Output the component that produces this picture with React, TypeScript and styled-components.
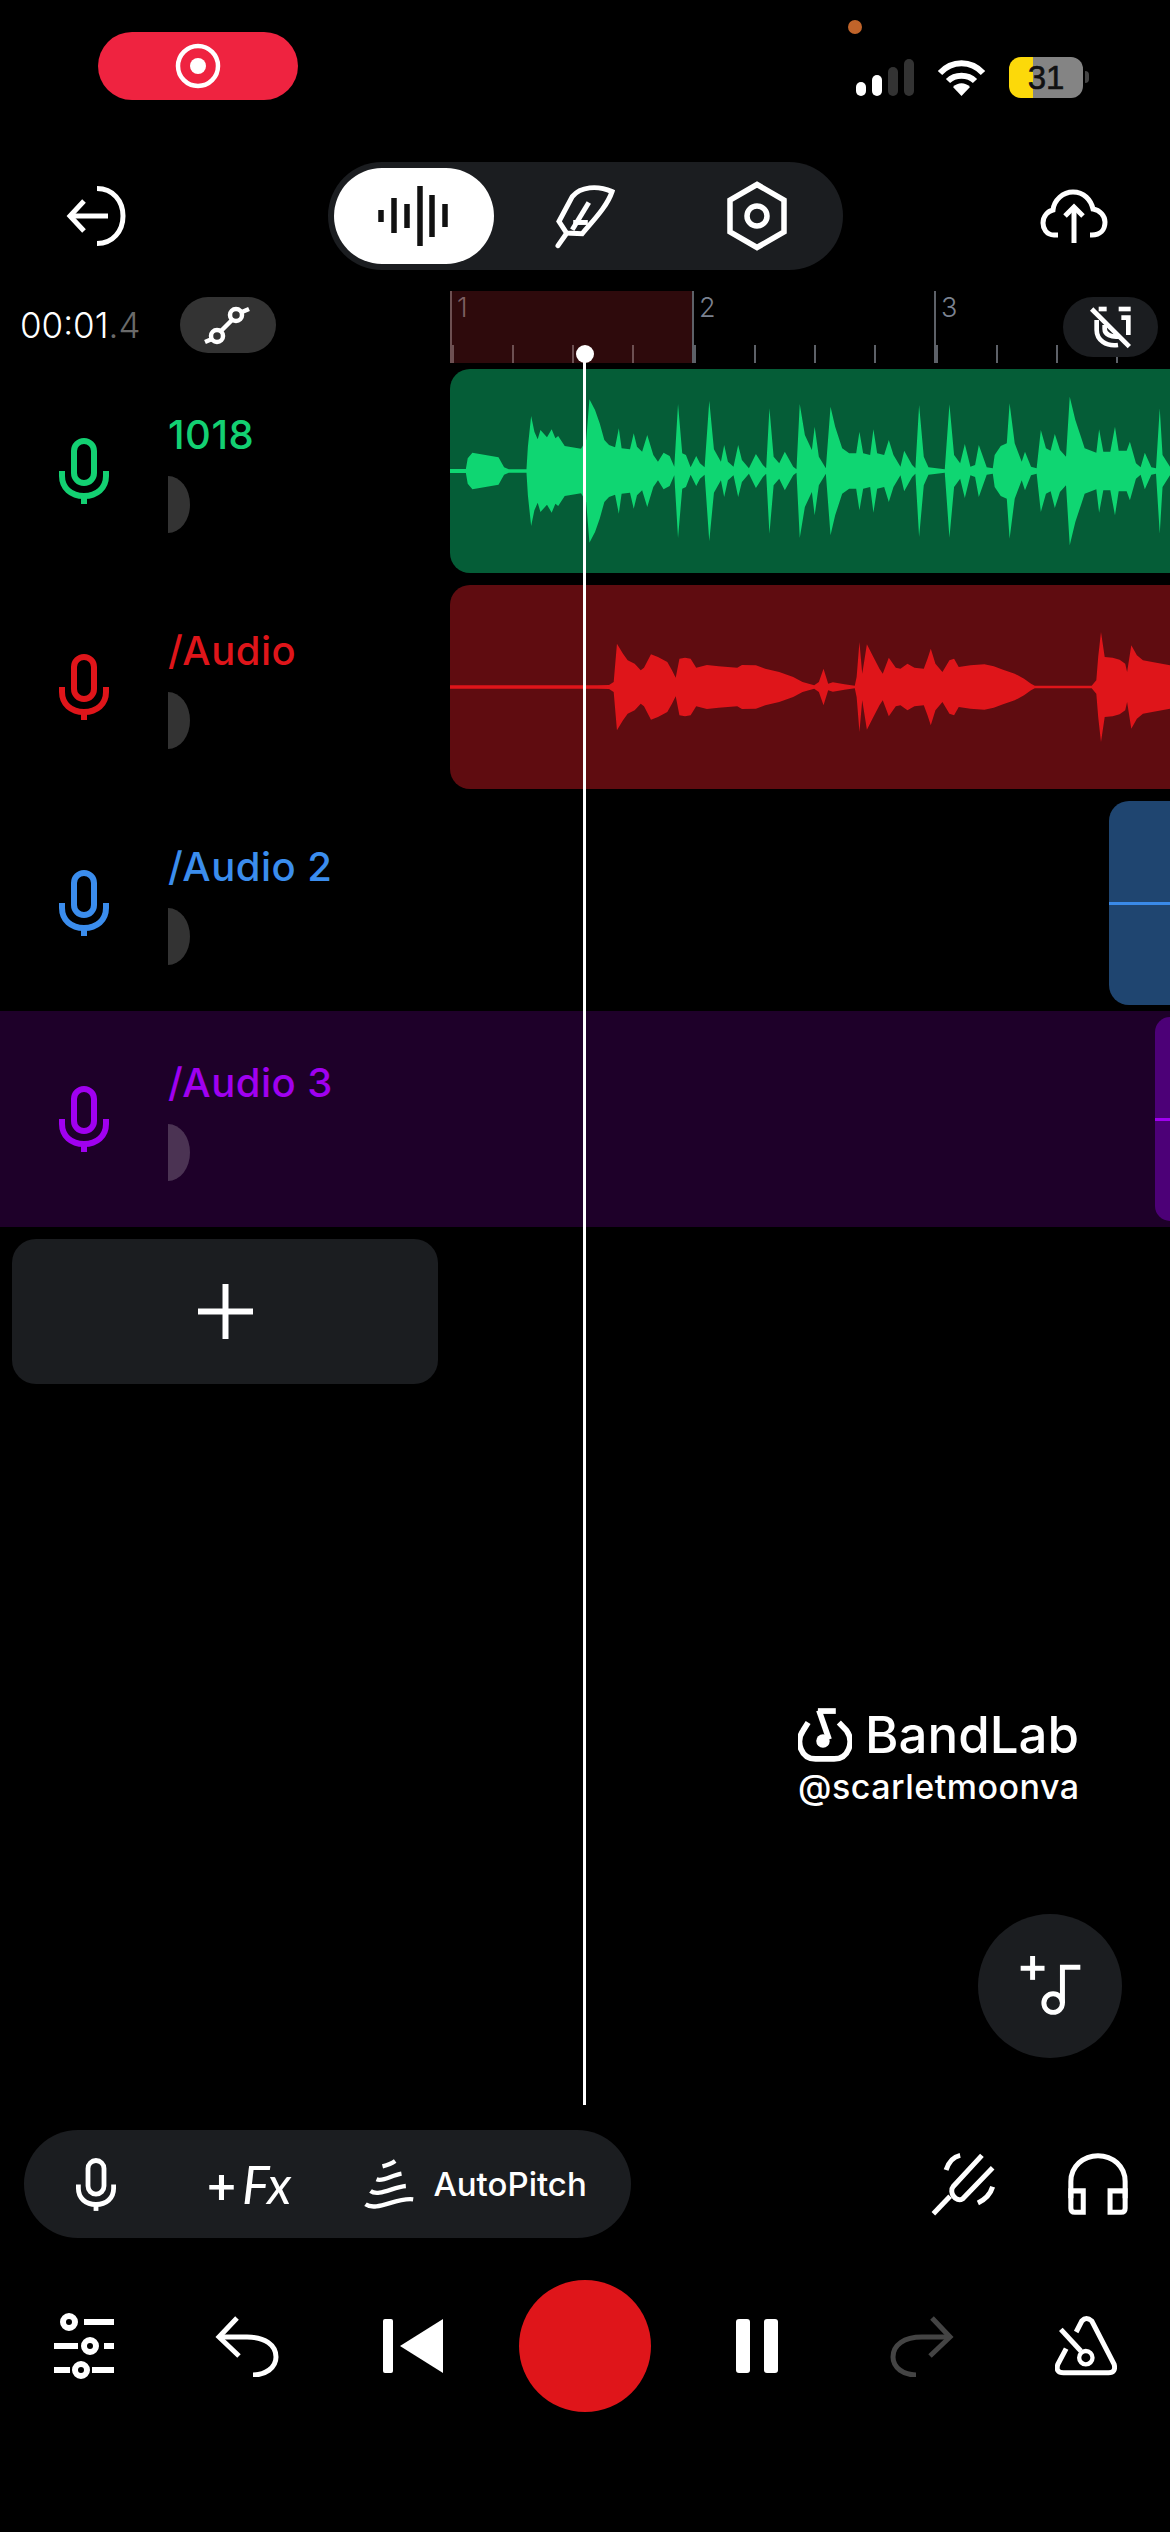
import React from 'react';
import styled, { createGlobalStyle } from 'styled-components';

const panel = '#1b1d20';
const uiFont = '"Inter", "Liberation Sans", sans-serif';

const GlobalStyle = createGlobalStyle`
  html, body {
    margin: 0;
    padding: 0;
    background: #000;
  }
`;

const Page = styled.div`
  position: relative;
  display: flex;
  flex-direction: column;
  width: 1170px;
  height: 2532px;
  overflow: hidden;
  background: #000;
  color: #fff;
  font-family: ${uiFont};
`;

/* status bar */
const StatusBar = styled.div`
  position: relative;
  display: flex;
  align-items: flex-start;
  height: 162px;
`;

const RecordingPill = styled.div`
  display: flex;
  align-items: center;
  justify-content: center;
  width: 200px;
  height: 68px;
  margin: 32px 0 0 98px;
  border-radius: 34px;
  background: #ef2340;
`;

const OrangeDot = styled.span`
  position: absolute;
  top: 20px;
  left: 848px;
  width: 14px;
  height: 14px;
  border-radius: 50%;
  background: #c0642a;
`;

const StatusIcons = styled.div`
  display: flex;
  align-items: center;
  gap: 23px;
  height: 41px;
  margin: 57px 87px 0 auto;
`;

const SignalBars = styled.div`
  display: flex;
  align-items: flex-end;
  gap: 6px;
  height: 37px;
`;

const SignalBar = styled.span<{ $h: number; $on?: boolean }>`
  width: 10px;
  height: ${(p) => p.$h}px;
  border-radius: 5px;
  background: ${(p) => (p.$on ? '#fff' : '#333')};
`;

const Battery = styled.div`
  position: relative;
  width: 74px;
  height: 41px;
  border-radius: 12px;
  background: linear-gradient(90deg, #fcd90a 0 24px, #848484 24px);
  color: #111;
  font-family: "Liberation Sans", sans-serif;
  font-size: 33px;
  font-weight: 400;
  line-height: 41px;
  text-align: center;
  -webkit-text-stroke: 0.6px #111;

  &::after {
    content: '';
    position: absolute;
    top: 14px;
    right: -6px;
    width: 4px;
    height: 12px;
    border-radius: 0 4px 4px 0;
    background: #444;
  }
`;

/* top toolbar */
const Toolbar = styled.div`
  display: grid;
  grid-template-columns: 328px 515px 1fr;
  align-items: center;
  height: 108px;
`;

const BackButton = styled.div`
  display: flex;
  padding-left: 66px;
`;

const Segmented = styled.div`
  display: flex;
  gap: 12px;
  box-sizing: border-box;
  height: 108px;
  padding: 6px;
  border-radius: 54px;
  background: ${panel};
`;

const SegmentTab = styled.div<{ $active?: boolean }>`
  display: flex;
  align-items: center;
  justify-content: center;
  width: 160px;
  height: 96px;
  border-radius: 48px;
  background: ${(p) => (p.$active ? '#fff' : 'transparent')};
`;

const UploadButton = styled.div`
  display: flex;
  justify-self: end;
  margin-right: 62px;
`;

/* timeline header */
const TimelineRow = styled.div`
  position: relative;
  display: flex;
  height: 72px;
  margin-top: 21px;
`;

const TimeBlock = styled.div`
  display: flex;
  align-items: center;
  flex: 0 0 450px;
  box-sizing: border-box;
  padding-left: 20px;
  height: 68px;
`;

const TimeText = styled.span`
  width: 160px;
  font-size: 35px;
  font-weight: 300;
  white-space: nowrap;

  em {
    font-style: normal;
    color: #6a6a6a;
  }
`;

const RoundButton = styled.div`
  display: flex;
  align-items: center;
  justify-content: center;
  width: 96px;
  height: 56px;
  border-radius: 28px;
  background: #333;
`;

const Ruler = styled.div`
  display: flex;
  flex: 1;
  overflow: hidden;
`;

const Bar = styled.div<{ $active?: boolean }>`
  position: relative;
  display: flex;
  align-items: flex-end;
  flex: 0 0 240.5px;
  height: 72px;
  box-sizing: border-box;
  border-left: 2px solid ${(p) => (p.$active ? '#6d5052' : '#5d6168')};
  background: ${(p) => (p.$active ? '#2e0a0c' : 'transparent')};
`;

const BarNumber = styled.span<{ $active?: boolean }>`
  position: absolute;
  top: 1px;
  left: 5px;
  font-size: 27px;
  font-weight: 300;
  line-height: 32px;
  color: ${(p) => (p.$active ? '#7d5f61' : '#7b8290')};
`;

const Beat = styled.span<{ $active?: boolean }>`
  flex: 0 0 60px;
  box-sizing: border-box;
  height: 18px;
  border-left: 2px solid ${(p) => (p.$active ? '#6d5052' : '#5d6168')};

  &:first-of-type {
    flex-basis: 58px;
    border-left: none;
  }
`;

const MagnetButton = styled.div`
  position: absolute;
  top: 6px;
  left: 1063px;
  display: flex;
  align-items: center;
  justify-content: center;
  width: 95px;
  height: 60px;
  border-radius: 30px;
  background: ${panel};
`;

/* tracks */
const TrackRow = styled.div<{ $selected?: boolean }>`
  display: flex;
  height: 216px;
  background: ${(p) => (p.$selected ? '#1e0029' : 'transparent')};
`;

const TrackHeader = styled.div`
  display: flex;
  flex: 0 0 450px;
  box-sizing: border-box;
`;

const MicCell = styled.div<{ $color: string }>`
  display: flex;
  align-items: center;
  justify-content: center;
  flex: 0 0 168px;
  color: ${(p) => p.$color};
`;

const TrackInfo = styled.div`
  display: flex;
  flex-direction: column;
  padding-top: 52px;
`;

const TrackName = styled.div<{ $color: string }>`
  height: 40px;
  font-size: 40px;
  font-weight: 500;
  line-height: 40px;
  letter-spacing: 0.5px;
  white-space: nowrap;
  color: ${(p) => p.$color};
`;

const Knob = styled.div`
  width: 22px;
  height: 57px;
  margin-top: 21px;
  border-radius: 0 22px 22px 0 / 0 28.5px 28.5px 0;
  background: rgba(255, 255, 255, 0.2);
`;

const Lane = styled.div<{ $offset: number }>`
  display: flex;
  flex: 1;
  box-sizing: border-box;
  padding: 6px 0 6px ${(p) => p.$offset}px;
  min-width: 0;
`;

const Clip = styled.div<{ $bg: string }>`
  display: flex;
  align-items: center;
  flex: 1;
  height: 204px;
  overflow: hidden;
  border-radius: 20px 0 0 20px;
  background: ${(p) => p.$bg};
`;

const ClipLine = styled.span<{ $color: string }>`
  flex: 1;
  height: 3px;
  background: ${(p) => p.$color};
`;

const WaveSvg = styled.svg`
  display: block;
  width: 100%;
  height: 100%;
`;

const AddTrack = styled.div`
  display: flex;
  align-items: center;
  justify-content: center;
  width: 426px;
  height: 145px;
  margin: 12px 0 0 12px;
  border-radius: 24px;
  background: ${panel};
`;

/* watermark and fab */
const Watermark = styled.div`
  display: flex;
  flex-direction: column;
  margin: 324px 0 0 798px;
`;

const BrandRow = styled.div`
  display: flex;
  align-items: center;
  gap: 13px;
  height: 54px;
`;

const BrandName = styled.span`
  font-size: 51px;
  font-weight: 500;
  line-height: 54px;
`;

const Handle = styled.div`
  margin-top: 5px;
  font-size: 34px;
  font-weight: 500;
  line-height: 40px;
  letter-spacing: 0.5px;
`;

const Fab = styled.div`
  display: flex;
  align-items: center;
  justify-content: center;
  width: 144px;
  height: 144px;
  margin: 107px 0 0 978px;
  border-radius: 50%;
  background: ${panel};
`;

/* bottom controls */
const ToolRow = styled.div`
  display: flex;
  align-items: center;
  height: 108px;
  margin: 72px 42px 0 24px;
`;

const ToolPill = styled.div`
  display: flex;
  align-items: center;
  box-sizing: border-box;
  width: 607px;
  height: 108px;
  padding-left: 52px;
  border-radius: 54px;
  background: ${panel};
`;

const FxLabel = styled.span`
  margin: 0 72px 0 91px;
  font-family: "Lato", sans-serif;
  font-size: 50px;
  font-weight: 700;
  line-height: 1;
  white-space: nowrap;

  i {
    margin-left: 6px;
    font-size: 52px;
    font-weight: 400;
  }
`;

const AutoPitchLabel = styled.span`
  margin-left: 18px;
  font-size: 33px;
  font-weight: 500;
  white-space: nowrap;
`;

const ToolIcons = styled.div`
  display: flex;
  align-items: center;
  gap: 71px;
  margin-left: auto;
`;

const Transport = styled.div`
  display: grid;
  grid-template-columns: 168px 158px 174px 170px 174px 156px 172px;
  justify-items: center;
  align-items: center;
  height: 132px;
  margin-top: 42px;
  color: #fff;
`;

const RecordButton = styled.div`
  width: 132px;
  height: 132px;
  border-radius: 50%;
  background: #df151a;
`;

const PauseBars = styled.div`
  display: flex;
  gap: 14px;
`;

const PauseBar = styled.span`
  width: 14px;
  height: 54px;
  border-radius: 3px;
  background: #fff;
`;

const Playhead = styled.div`
  position: absolute;
  top: 354px;
  left: 583px;
  width: 3px;
  height: 1751px;
  background: #fff;

  &::before {
    content: '';
    position: absolute;
    top: -9px;
    left: -7.5px;
    width: 18px;
    height: 18px;
    border-radius: 50%;
    background: #fff;
  }
`;

/* icons */
const Line = ({ size = [50, 50], view, w = 5, color = 'currentColor', children }: {
  size?: number[];
  view: string;
  w?: number;
  color?: string;
  children: React.ReactNode;
}) => (
  <svg
    width={size[0]}
    height={size[1]}
    viewBox={view}
    fill="none"
    stroke={color}
    strokeWidth={w}
    style={{ display: 'block', flex: 'none' }}
  >
    {children}
  </svg>
);

const MicIcon = ({ width = 50, height = 66 }: { width?: number; height?: number }) => (
  <Line size={[width, height]} view="0 0 50 66" w={6}>
    <rect x="15" y="3" width="20" height="42" rx="10" />
    <path d="M3 33V38C3 50 12 58 25 58C38 58 47 50 47 38V33" />
    <path d="M25 58V66" />
  </Line>
);

const waveBars = [
  [5, 210, 222],
  [18, 198, 233],
  [31, 204, 228],
  [44, 186, 246],
  [56, 195, 237],
  [69, 204, 227],
];

const WaveformIcon = () => (
  <Line size={[75, 60]} view="0 186 75 60" w={5.5} color="#111">
    {waveBars.map(([x, a, b]) => (
      <path key={x} d={`M${x} ${a}V${b}`} />
    ))}
  </Line>
);

const greenPeaks = [
  [24, 327], [58, 327], [62, 295], [72, 278], [128, 292], [140, 322], [150, 328], [188, 328], [191, 260], [198, 168],
  [205, 215], [212, 238], [218, 210], [232, 232], [242, 208], [250, 235], [256, 228], [270, 258], [305, 266], [316, 240],
  [323, 118], [335, 150], [345, 190], [355, 240], [365, 255], [378, 262], [386, 205], [392, 265], [410, 268], [418, 220],
  [425, 260], [436, 275], [447, 225], [460, 285], [470, 305], [482, 278], [495, 288], [505, 320], [513, 132], [522, 280],
  [530, 285], [540, 322], [552, 288], [560, 310], [570, 322], [580, 122], [590, 268], [605, 305], [612, 255], [620, 305],
  [632, 320], [642, 255], [650, 300], [665, 325], [680, 282], [695, 315], [702, 325], [709, 145], [718, 290], [730, 310],
  [742, 275], [760, 320], [767, 328], [774, 132], [785, 225], [800, 270], [806, 200], [815, 290], [830, 325], [840, 140],
  [850, 200], [865, 265], [880, 280], [895, 280], [902, 215], [910, 280], [925, 285], [932, 208], [940, 280], [955, 285],
  [965, 240], [975, 285], [990, 320], [998, 272], [1015, 315], [1022, 325], [1030, 135], [1040, 290], [1050, 322], [1085, 328],
  [1095, 133], [1105, 285], [1118, 310], [1128, 252], [1140, 320], [1150, 315], [1158, 255], [1175, 322], [1188, 325], [1192, 285],
  [1205, 258], [1218, 250], [1224, 130], [1235, 250], [1250, 305], [1257, 275], [1270, 320], [1282, 325], [1291, 210], [1302, 265],
  [1312, 272], [1321, 222], [1332, 270], [1345, 290], [1353, 110], [1365, 180], [1378, 235], [1385, 265], [1410, 278], [1416, 208],
  [1425, 275], [1440, 275], [1450, 200], [1458, 272], [1475, 272], [1482, 245], [1495, 310], [1505, 322], [1514, 278], [1528, 322],
  [1538, 325], [1546, 145], [1552, 285], [1568, 320],
];

const redPeaks = [
  [24, 315], [340, 315], [365, 314], [375, 305], [382, 190], [395, 220], [405, 240], [420, 250], [433, 270], [440, 262],
  [455, 222], [470, 230], [490, 245], [500, 270], [508, 292], [516, 235], [528, 232], [540, 235], [552, 262], [575, 254],
  [600, 258], [640, 262], [650, 254], [680, 255], [700, 265], [730, 275], [760, 290], [780, 305], [805, 315], [815, 305],
  [825, 265], [835, 310], [845, 306], [870, 312], [892, 316], [896, 290], [902, 185], [908, 280], [918, 192], [930, 225],
  [945, 265], [952, 280], [965, 232], [980, 262], [990, 265], [1005, 250], [1020, 262], [1040, 265], [1048, 235], [1055, 205],
  [1065, 250], [1080, 275], [1095, 240], [1105, 235], [1115, 260], [1140, 255], [1170, 252], [1190, 258], [1210, 268], [1235, 280],
  [1255, 295], [1270, 310], [1278, 316], [1400, 316], [1410, 300], [1414, 230], [1420, 155], [1428, 230], [1445, 232], [1460, 238],
  [1472, 250], [1476, 275], [1485, 195], [1497, 225], [1510, 240], [1530, 245], [1568, 255],
];

// peaks are measured on the upper side, the lower side is mirrored around the clip's centre line
const wavePath = (peaks: number[][], centre: number) => {
  const top = peaks.map(([x, y]) => `${x} ${y}`);
  const bottom = [...peaks].reverse().map(([x, y]) => `${x} ${2 * centre - y}`);
  return `M${top.join('L')}L${bottom.join('L')}Z`;
};

const Waveform = ({ peaks, centre, top, color }: { peaks: number[][]; centre: number; top: number; color: string }) => (
  <WaveSvg viewBox={`24 ${top} 1544 612`} preserveAspectRatio="none">
    <path d={wavePath(peaks, centre)} fill={color} />
  </WaveSvg>
);

const tracks = [
  { name: '1018', color: '#13d072', clip: '#055d37', offset: 0, peaks: greenPeaks, centre: 333, top: 27, wave: '#0fd672' },
  { name: '/Audio', color: '#df151a', clip: '#5f0c10', offset: 0, peaks: redPeaks, centre: 320, top: 14, wave: '#df151a' },
  { name: '/Audio 2', color: '#3b8ded', clip: '#1f4570', offset: 659, line: '#3a8ae8' },
  { name: '/Audio 3', color: '#a000f0', clip: '#4c0077', offset: 705, line: '#a000f0', selected: true },
];

export default function App() {
  return (
    <Page>
      <GlobalStyle />
      <StatusBar>
        <RecordingPill>
          <Line size={[46, 46]} view="0 0 46 46" w={4.5} color="#fff">
            <circle cx="23" cy="23" r="20" />
            <circle cx="23" cy="23" r="8" fill="#fff" stroke="none" />
          </Line>
        </RecordingPill>
        <OrangeDot />
        <StatusIcons>
          <SignalBars>
            <SignalBar $h={14} $on />
            <SignalBar $h={21} $on />
            <SignalBar $h={29} />
            <SignalBar $h={37} />
          </SignalBars>
          <Line size={[49, 37]} view="0 0 49 37" w={6} color="#fff">
            <path d="M3 14C15 1 34 1 46 14" />
            <path d="M11 22C18 15 31 15 38 22" />
            <path d="M16 28C21 23 28 23 33 28L24.500 37Z" fill="#fff" stroke="none" />
          </Line>
          <Battery>31</Battery>
        </StatusIcons>
      </StatusBar>

      <Toolbar>
        <BackButton>
          <Line size={[60, 60]} view="0 0 60 60" color="#fff">
            <path d="M4 30H42" />
            <path d="M18 15L4 30L18 45" />
            <path d="M31 2.500C47 2.500 57 15 57 30C57 45 47 57.500 31 57.500" />
          </Line>
        </BackButton>
        <Segmented>
          <SegmentTab $active>
            <WaveformIcon />
          </SegmentTab>
          <SegmentTab>
            <Line size={[63, 67]} view="70 30 190 200" w={15} color="#fff">
              <path d="M245 55C200 35 150 40 125 70L85 145L108 180L155 182C190 140 230 100 245 55Z" />
              <path d="M175 88L125 170" />
              <path d="M128 148H172" />
              <path d="M105 185L82 218" strokeLinecap="round" />
            </Line>
          </SegmentTab>
          <SegmentTab>
            <Line size={[60, 70]} view="0 0 60 70" w={5.5} color="#fff">
              <path d="M30 3.500L57 19V51L30 66.500L3 51V19Z" />
              <circle cx="30" cy="35" r="10" />
            </Line>
          </SegmentTab>
        </Segmented>
        <UploadButton>
          <Line size={[68, 54]} view="0 0 68 54" color="#fff">
            <path d="M18 46H14C6 46 3 39 3 34C3 27 8 22 13 21C14 11 23 3 33 3C44 3 51 11 53 20C60 21 65 27 65 33C65 41 60 46 52 46H50" />
            <path d="M34 54V18" />
            <path d="M25 27L34 18L43 27" />
          </Line>
        </UploadButton>
      </Toolbar>

      <TimelineRow>
        <TimeBlock>
          <TimeText>
            00:01<em>.4</em>
          </TimeText>
          <RoundButton>
            <Line size={[50, 42]} view="0 0 50 42" w={4.5} color="#fff">
              <circle cx="14" cy="32" r="6" />
              <circle cx="33" cy="11" r="6" />
              <path d="M18 27L29 16" />
              <path d="M2 38L9 35" />
              <path d="M39 8L46 5" />
            </Line>
          </RoundButton>
        </TimeBlock>
        <Ruler>
          {[1, 2, 3].map((n) => (
            <Bar key={n} $active={n === 1}>
              <BarNumber $active={n === 1}>{n}</BarNumber>
              {[0, 1, 2, 3].map((b) => (
                <Beat key={b} $active={n === 1} />
              ))}
            </Bar>
          ))}
        </Ruler>
        <MagnetButton>
          <Line size={[44, 45]} view="140 60 130 135" w={14} color="#fff">
            <path d="M168 72H192" />
            <path d="M228 72H264" />
            <path d="M147 72L260 185" />
            <path d="M236 98H257V150" />
            <path d="M162 105V135C162 165 190 185 226 180" />
            <path d="M186 120V132C186 148 205 158 232 154" />
          </Line>
        </MagnetButton>
      </TimelineRow>

      {tracks.map((t) => (
        <TrackRow key={t.name} $selected={t.selected}>
          <TrackHeader>
            <MicCell $color={t.color}>
              <MicIcon />
            </MicCell>
            <TrackInfo>
              <TrackName $color={t.color}>{t.name}</TrackName>
              <Knob />
            </TrackInfo>
          </TrackHeader>
          <Lane $offset={t.offset}>
            <Clip $bg={t.clip}>
              {t.peaks && <Waveform peaks={t.peaks} centre={t.centre} top={t.top} color={t.wave} />}
              {t.line && <ClipLine $color={t.line} />}
            </Clip>
          </Lane>
        </TrackRow>
      ))}

      <AddTrack>
        <Line size={[55, 55]} view="0 0 55 55" w={6} color="#fff">
          <path d="M27.500 0V55" />
          <path d="M0 27.500H55" />
        </Line>
      </AddTrack>

      <Watermark>
        <BrandRow>
          <Line size={[54, 54]} view="113 85 160 160" w={17} color="#fff">
            <path d="M143 128L128 152C105 185 122 236 165 236H220C263 236 280 185 257 152L234 128" />
            <path d="M172 94H225" />
            <path d="M175 92L205 178" />
            <circle cx="187" cy="183" r="20" fill="#fff" stroke="none" />
          </Line>
          <BrandName>BandLab</BrandName>
        </BrandRow>
        <Handle>@scarletmoonva</Handle>
      </Watermark>

      <Fab>
        <Line size={[63, 63]} view="775 825 190 190" w={15} color="#fff">
          <path d="M780 865H852" />
          <path d="M816 828V900" />
          <path d="M906 970V862H960" />
          <circle cx="878" cy="970" r="28" />
        </Line>
      </Fab>

      <ToolRow>
        <ToolPill>
          <MicIcon width={40} height={55} />
          <FxLabel>
            +<i>Fx</i>
          </FxLabel>
          <Line size={[52, 55]} view="40 30 155 165" w={13} color="#fff">
            <path d="M98 58C110 55 125 50 136 42" />
            <path d="M80 97C100 105 125 85 155 80" />
            <path d="M62 132C85 150 130 120 168 117" />
            <path d="M47 172C80 195 140 150 190 157" />
          </Line>
          <AutoPitchLabel>AutoPitch</AutoPitchLabel>
        </ToolPill>
        <ToolIcons>
          <Line size={[67, 67]} view="35 35 200 200" w={15} color="#fff">
            <path d="M45 222L95 170" />
            <path d="M190 48L105 140C90 158 112 190 132 178L222 85" />
            <path d="M125 48C105 52 90 70 83 92" />
            <path d="M222 142C215 165 200 180 178 190" />
          </Line>
          <Line size={[60, 63]} view="445 35 178 188" w={15} color="#fff">
            <path d="M453 170V120C453 75 490 43 534 43C578 43 615 75 615 120V170" />
            <path d="M453 148H490V212H465Q453 212 453 200Z" />
            <path d="M615 148H570V212H603Q615 212 615 200Z" />
          </Line>
        </ToolIcons>
      </ToolRow>

      <Transport>
        <Line size={[60, 66]} view="0 0 60 66" w={6}>
          <circle cx="15" cy="9" r="6" />
          <path d="M30 9H60" />
          <path d="M0 33H24" />
          <circle cx="36" cy="33" r="6" />
          <path d="M50 33H60" />
          <circle cx="27" cy="57" r="6" />
          <path d="M0 57H16" />
          <path d="M38 57H60" />
        </Line>
        <Line size={[64, 62]} view="0 0 64 62">
          <path d="M22 3L4 22L24 41" />
          <path d="M5 22H32C50 22 61 30 61 42C61 53 50 60 38 60" />
        </Line>
        <Line size={[60, 54]} view="0 0 60 54" w={0}>
          <rect x="0" y="0" width="10" height="54" rx="2" fill="#fff" />
          <path d="M60 0V54L17 27Z" fill="#fff" />
        </Line>
        <RecordButton />
        <PauseBars>
          <PauseBar />
          <PauseBar />
        </PauseBars>
        <Line size={[64, 62]} view="0 0 64 62" color="#444">
          <path d="M42 3L60 22L40 41" />
          <path d="M59 22H32C14 22 3 30 3 42C3 53 14 60 26 60" />
        </Line>
        <Line size={[62, 60]} view="45 50 185 180" w={15}>
          <path d="M108 98L125 65Q138 50 155 65L222 195Q228 220 205 220H70Q45 220 53 195L78 148" />
          <path d="M62 90L122 155" />
          <circle cx="137" cy="175" r="20" strokeWidth="13" />
        </Line>
      </Transport>

      <Playhead />
    </Page>
  );
}
